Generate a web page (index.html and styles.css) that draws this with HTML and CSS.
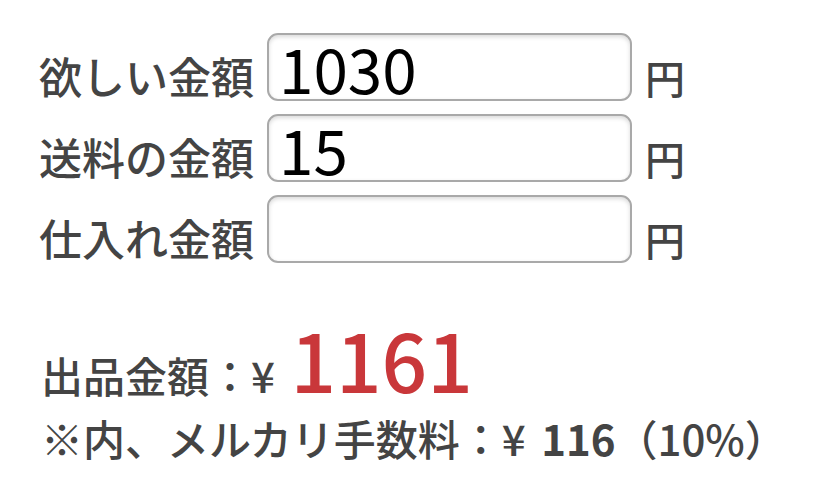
FILE: index.html
```html
<!DOCTYPE html>
<html>
<head>
<meta charset="utf-8">
<title>メルカリ 出品金額計算</title>
<link rel="stylesheet" href="styles.css">
</head>
<body>
    <!-- 入力フォーム -->
    <div class="form">
        <div class="row">
            <span class="label">欲しい金額</span>
            <input class="price" type="text" value="1030">
            <span class="unit">円</span>
        </div>
        <div class="row">
            <span class="label">送料の金額</span>
            <input class="price" type="text" value="15">
            <span class="unit">円</span>
        </div>
        <div class="row">
            <span class="label">仕入れ金額</span>
            <input class="price" type="text" value="">
            <span class="unit">円</span>
        </div>
    </div>
    <!-- 計算結果 -->
    <div class="result">
        <p class="total">出品金額：¥ <span class="total-num">1161</span></p>
        <p class="fee">※内、メルカリ手数料：¥ <span class="fee-num">116</span>（10%）</p>
    </div>
</body>
</html>
```

FILE: styles.css
```css
* {
    margin: 0;
    padding: 0;
}
body {
    background-color: #fff;
    color: #444;
    font-family: "Noto Sans CJK JP", "Noto Sans", sans-serif;
}
/* 入力フォーム */
.form {
    padding: 33px 0 0 39px;
}
.row {
    display: flex;
    align-items: baseline;
    margin-bottom: 8px;
}
.label {
    font-size: 43px;
    font-weight: 500;
    width: 228px;
}
.price {
    width: 365px;
    height: 68px;
    box-sizing: border-box;
    padding: 0 10px;
    font-family: "Noto Sans CJK JP", "Noto Sans", sans-serif;
    font-size: 62px;
    color: #000;
    border: 2px solid #a9a9a9;
    border-radius: 11px;
    background-color: #fff;
    box-shadow: inset 0 2px 4px rgba(0, 0, 0, 0.15);
    outline: none;
}
.unit {
    font-size: 40px;
    font-weight: 500;
    margin-left: 13px;
}
/* 計算結果 */
.result {
    padding: 42px 0 0 41px;
}
.total {
    font-size: 42px;
    font-weight: 500;
    line-height: 80px;
}
.total-num {
    color: #c9373a;
    font-size: 80px;
    font-weight: 500;
    margin-left: 6px;
}
.fee {
    font-size: 42px;
    font-weight: 500;
    line-height: 46px;
}
.fee-num {
    font-weight: bold;
    margin-left: 6px;
}
```
